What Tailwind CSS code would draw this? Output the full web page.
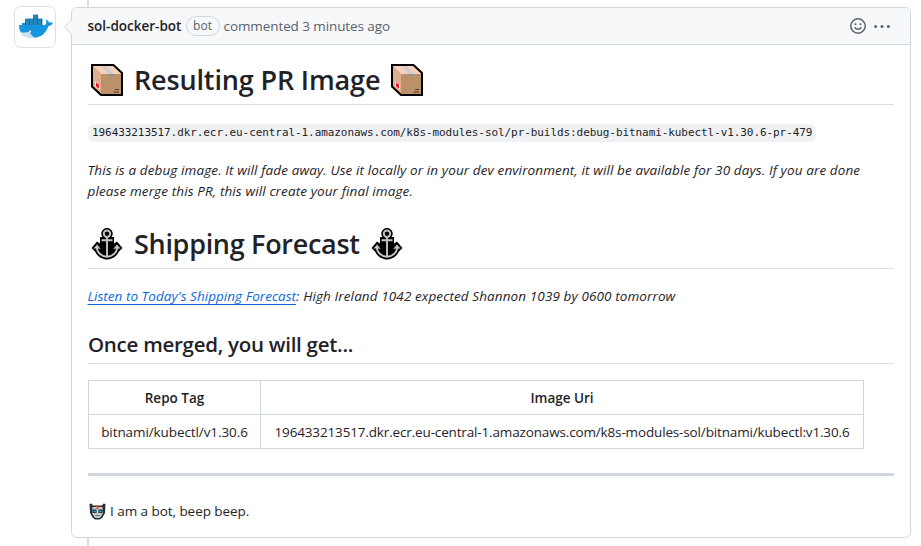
<!DOCTYPE html>
<html lang="en">
<head>
<meta charset="utf-8">
<title>Comment</title>
<script src="https://cdn.jsdelivr.net/npm/@tailwindcss/browser@4"></script>
</head>
<body class="w-[921px] h-[546px] overflow-hidden bg-white font-['Open_Sans','Noto_Sans',sans-serif] text-[13.5px] leading-[21px] text-[#1f2328]">
<svg class="hidden">
  <symbol id="box" viewBox="0 0 32 32">
    <path d="M1 1H22.500L31 9V31H10L1 22.500Z" fill="#bc9068"/>
    <path d="M1 1L10 10V31L1 22.500Z" fill="#dcae8c"/>
    <path d="M1 1H22.500L31 10H10Z" fill="#f5d0bb"/>
    <path d="M10.500 1H14.500L22 10H17.500Z" fill="#c9ccd2"/>
    <path d="M17.500 10H22V12H17.500Z" fill="#8c939e"/>
    <path d="M4 17.500L9 20.500V25.500L4 22.500Z" fill="#fbe9e4"/>
    <path d="M5 18.500L8 20.500V24.500L5 22.500Z" fill="#e81836"/>
    <path d="M24 25.500H28M22.500 28H28" stroke="#493a2c" stroke-width="1"/>
    <path d="M1 1H22.500L31 9V31H10L1 22.500Z" fill="none" stroke="#000" stroke-width="2"/>
  </symbol>
  <symbol id="anchor" viewBox="0 0 32 32">
    <path d="M16 0C19 0 21.700 2.500 21.700 5.500C21.700 7 21.200 8.200 20.500 9H23V15.500L26 13.500L31.500 20L28 23.500C26 28 21 31.500 16 31.500S6 28 4 23.500L.500 20L6 13.500L9 15.500V9H11.500C10.800 8.200 10.300 7 10.300 5.500C10.300 2.500 13 0 16 0Z"/>
    <g fill="none" stroke="#c5c6c9" stroke-width="1.900"><circle cx="16" cy="5.700" r="3.200"/><path d="M16 9.500V28.500M10.500 12.200H21.500M5.500 19C6.500 25 10.500 28.700 16 28.700S25.500 25 26.500 19"/></g>
    <path d="M2.500 20.500L6 16.500L9.800 21L6.500 20.500ZM29.500 20.500L26 16.500L22.200 21L25.500 20.500Z" fill="#c5c6c9"/>
  </symbol>
</svg>
<div class="relative flex pl-[14px] pt-[7px]">
  <div class="absolute left-[87px] top-0 w-[2px] h-[546px] bg-[#d8dee4]"></div>
  <div class="relative -mt-px w-[42px] h-[42px] rounded-[7px] border border-[#dcdfe3] bg-white">
    <svg class="absolute left-[3px] top-[6px]" width="36" height="28" viewBox="0 0 36 28">
      <path d="M1 12H27C28.500 11 28.700 8 27.700 6.500C29.500 6.500 30.500 8.500 31 9.500C32.500 9 34 9.300 35 10C34 12 32 12.800 30.500 13C28 20 23 25 14.500 25C6 25 1 20 1 12Z" fill="#1794df"/>
      <path d="M2.500 19C6 20 9 19.500 11.500 18.500C12.500 21.500 14.500 23.700 17.500 24.700C11 26 5 24 2.500 19Z" fill="#c9e0ee"/>
      <path d="M4 10H7.500V12H4ZM7.500 5.500H24.500V12H7.500ZM15.500 1.500H20V6H15.500Z" fill="#2389bd"/>
      <path d="M7.500 6V12M11.500 6V12M15.500 2V12M19.500 2V12M23.500 6V12" stroke="#0d628f" stroke-width=".8"/>
      <circle cx="12" cy="18.500" r="1.100" fill="#e8f3f9"/>
    </svg>
  </div>
  <div class="relative ml-[15px] w-[840px] h-[531px] rounded-md border border-[#d0d7de] bg-white">
    <svg class="absolute -left-[8px] top-[10px] z-10" width="9" height="18" viewBox="0 0 9 18"><path d="M9 .500L.700 9L9 17.500" fill="#f6f8fa"/><path d="M7.500 1.500L.700 9L7.500 16.500" fill="none" stroke="#d0d7de"/></svg>
    <div class="flex items-center h-[37px] pl-[16px] pr-[20px] rounded-t-[5px] border-b border-[#d0d7de] bg-[#f6f8fa] whitespace-nowrap">
      <span class="w-[94px] -ml-[0.500px] font-semibold">sol-docker-bot</span>
      <span class="ml-[4px] w-[34px] h-[20px] rounded-full border border-[#d0d7de] text-center text-[12px] leading-[18px] font-medium text-[#59636e]">bot</span>
      <span class="ml-[4px] text-[#59636e] tracking-[-0.090px]">commented 3 minutes ago</span>
      <svg class="ml-auto" width="16" height="16" viewBox="0 0 16 16" fill="none" stroke="#59636e" stroke-width="1.500"><circle cx="8" cy="8" r="7.200"/><path d="M5 9.700C6.300 11.700 9.700 11.700 11 9.700" stroke-linecap="round"/><g fill="#59636e" stroke="none"><circle cx="5.500" cy="6.300" r="1"/><circle cx="10.500" cy="6.300" r="1"/></g></svg>
      <svg class="ml-[8px]" width="16" height="16" viewBox="0 0 16 16" fill="#59636e"><circle cx="1.600" cy="8.500" r="1.500"/><circle cx="8" cy="8.500" r="1.500"/><circle cx="14.400" cy="8.500" r="1.500"/></svg>
    </div>
    <div class="pt-[16px] px-[16px] whitespace-nowrap">
      <h1 class="flex items-start h-[44px] border-b border-[#d8dee4] text-[27px] leading-[37px] font-semibold"><svg class="mt-[3px] ml-[3px] mr-[11px]" width="32" height="32"><use href="#box"/></svg><span class="w-[246px] tracking-[-0.150px]">Resulting PR Image</span><svg class="mt-[3px] ml-[11px]" width="32" height="32"><use href="#box"/></svg></h1>
      <div class="flex mt-[19px]"><code class="h-[18px] px-[4px] rounded-md bg-[#eff1f3] font-['DejaVu_Sans_Mono',monospace] text-[11px] leading-[18px] tracking-[-0.074px]">196433213517.dkr.ecr.eu-central-1.amazonaws.com/k8s-modules-sol/pr-builds:debug-bitnami-kubectl-v1.30.6-pr-479</code></div>
      <p class="mt-[18px] -ml-[0.500px] italic tracking-[0.115px]">This is a debug image. It will fade away. Use it locally or in your dev environment, it will be available for 30 days. If you are done<br>please merge this PR, this will create your final image.</p>
      <h1 class="flex items-start mt-[23px] h-[44px] border-b border-[#d8dee4] text-[27px] leading-[37px] font-semibold"><svg class="mt-[3px] ml-[3px] mr-[11px]" width="32" height="32"><use href="#anchor"/></svg><span class="w-[226px] tracking-[-0.300px]">Shipping Forecast</span><svg class="mt-[3px] ml-[11px]" width="32" height="32"><use href="#anchor"/></svg></h1>
      <p class="mt-[17px] -ml-[0.500px] italic tracking-[0.105px]"><a class="text-[#0969da] underline underline-offset-[3px] tracking-[0.035px]">Listen to Today's Shipping Forecast</a>: High Ireland 1042 expected Shannon 1039 by 0600 tomorrow</p>
      <h2 class="mt-[24px] h-[33px] border-b border-[#d8dee4] text-[20.500px] leading-[26px] font-semibold tracking-[-0.270px]">Once merged, you will get...</h2>
      <table class="mt-[16px] w-[776px] table-fixed border-collapse text-center">
        <colgroup><col class="w-[172px]"><col></colgroup>
        <tr class="h-[34px]"><th class="pt-[2px] border border-[#d0d7de] font-semibold">Repo Tag</th><th class="pt-[2px] border border-[#d0d7de] font-semibold">Image Uri</th></tr>
        <tr class="h-[34px]"><td class="pt-[2px] border border-[#d0d7de] tracking-[-0.090px]">bitnami/kubectl/v1.30.6</td><td class="pt-[2px] border border-[#d0d7de] tracking-[-0.150px]">196433213517.dkr.ecr.eu-central-1.amazonaws.com/k8s-modules-sol/bitnami/kubectl:v1.30.6</td></tr>
      </table>
      <div class="mt-[24px] h-[3px] bg-[#d0d7de]"></div>
      <p class="flex mt-[25px] tracking-[-0.050px]"><svg class="mt-[2px] ml-px mr-[4px]" width="17" height="17" viewBox="0 0 17 17"><path d="M.500 1L2.500 .500L4 2.500H13L14.500 .500L16.500 1L16 10L13.500 14.500L11 16.500H6L3.500 14.500L1 10Z" fill="#2b2e31"/><path d="M3.500 4H13.500L14 10L12 13.500L10.500 15H6.500L5 13.500L3 10Z" fill="#c4cbd0"/><path d="M7.500 2H9.500V6H7.500Z" fill="#ef5a35"/><path d="M3.500 6.500H7.500V10H3.500ZM9.500 6.500H13.500V10H9.500Z" fill="#172126"/><path d="M4.500 7.500H6.800V9.200H4.500ZM10.200 7.500H12.500V9.200H10.200Z" fill="#12b9dc"/><path d="M6.500 12.500H10.500" stroke="#666"/></svg>I am a bot, beep beep.</p>
    </div>
  </div>
</div>
</body>
</html>
